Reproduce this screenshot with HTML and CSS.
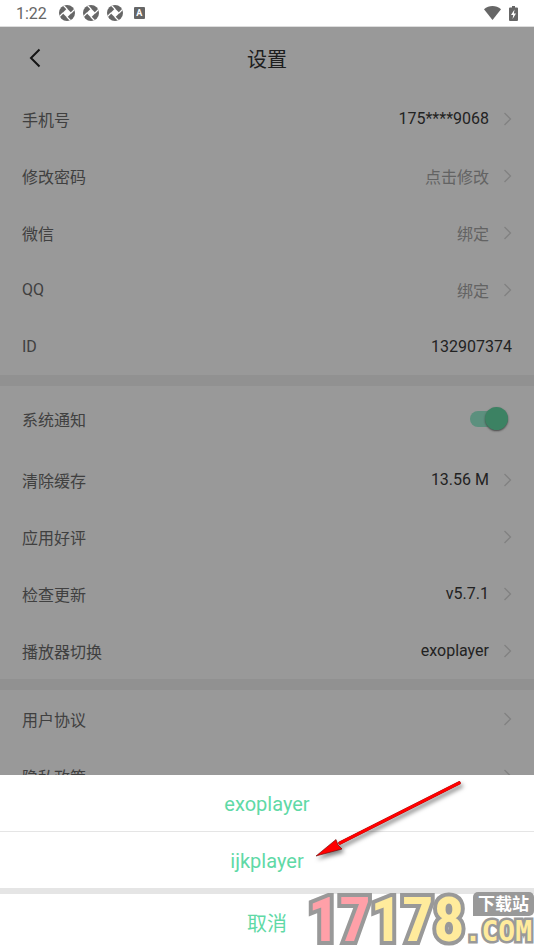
FILE: index.html
```html
<!DOCTYPE html>
<html lang="zh-CN">
<head>
<meta charset="utf-8">
<meta name="viewport" content="width=device-width, initial-scale=1">
<title>设置</title>
<link rel="stylesheet" href="styles.css">
</head>
<body>
<svg class="defs" aria-hidden="true">
  <symbol id="chevron" viewBox="0 0 9 14"><path d="M1.5 1 7.5 7l-6 6" fill="none" stroke="currentColor" stroke-width="1.3"/></symbol>
  <symbol id="fan" viewBox="0 0 16 16">
    <circle cx="8" cy="8" r="8" fill="currentColor"/>
    <path d="M8 3.500 12.500 8 8 12.500 3.500 8z" fill="#fff"/>
    <path d="M8 4 4.500.5M12 8l3.500-3.500M8 12l3.500 3.500M4 8 .5 11.500" stroke="#fff" stroke-width="1.2"/>
  </symbol>
</svg>

<div class="status">
  <span class="clock">1:22</span>
  <svg class="fan"><use href="#fan"/></svg>
  <svg class="fan"><use href="#fan"/></svg>
  <svg class="fan"><use href="#fan"/></svg>
  <span class="badge">A</span>
  <svg class="wifi" viewBox="0 0 17 14"><path d="M8.5 14 0 3.3C5-1 12-1 17 3.3z" fill="currentColor"/></svg>
  <svg class="battery" viewBox="0 0 9 15"><path d="M3 0h3v1.5h2q1 0 1 1V14q0 1-1 1H1q-1 0-1-1V2.5q0-1 1-1h2z" fill="currentColor"/><path d="M5.5 3.5 2 9h2.2l-.6 4L7 7.500H4.900z" fill="#fff"/></svg>
</div>

<main class="page">
  <header class="header">
    <button class="back" aria-label="返回"><svg viewBox="0 0 12 20"><path d="M10.5 1.5 2 10l8.500 8.500" fill="none" stroke="currentColor" stroke-width="2"/></svg></button>
    <h1>设置</h1>
  </header>

  <section class="group">
    <button class="row"><span>手机号</span><span class="value">175****9068</span><svg class="chevron"><use href="#chevron"/></svg></button>
    <button class="row"><span>修改密码</span><span class="value muted">点击修改</span><svg class="chevron"><use href="#chevron"/></svg></button>
    <button class="row"><span>微信</span><span class="value muted">绑定</span><svg class="chevron"><use href="#chevron"/></svg></button>
    <button class="row"><span>QQ</span><span class="value muted">绑定</span><svg class="chevron"><use href="#chevron"/></svg></button>
    <div class="row"><span>ID</span><span class="value">132907374</span></div>
  </section>

  <section class="group">
    <div class="row tall"><label for="notice">系统通知</label><input class="switch" id="notice" type="checkbox" role="switch" checked></div>
    <button class="row"><span>清除缓存</span><span class="value">13.56 M</span><svg class="chevron"><use href="#chevron"/></svg></button>
    <button class="row"><span>应用好评</span><span class="value"></span><svg class="chevron"><use href="#chevron"/></svg></button>
    <button class="row"><span>检查更新</span><span class="value">v5.7.1</span><svg class="chevron"><use href="#chevron"/></svg></button>
    <button class="row"><span>播放器切换</span><span class="value">exoplayer</span><svg class="chevron"><use href="#chevron"/></svg></button>
  </section>

  <section class="group">
    <button class="row"><span>用户协议</span><span class="value"></span><svg class="chevron"><use href="#chevron"/></svg></button>
    <button class="row"><span>隐私政策</span><span class="value"></span><svg class="chevron"><use href="#chevron"/></svg></button>
  </section>
  <div class="backdrop"></div>
</main>

<div class="sheet" role="dialog" aria-label="播放器切换">
  <button class="option">exoplayer</button>
  <button class="option second">ijkplayer</button>
  <button class="option cancel">取消</button>

  <svg class="arrow" viewBox="0 0 160 90" aria-hidden="true">
    <path d="M143 8 24 68" stroke="#a00" stroke-width="3.600" stroke-linecap="round"/>
    <path d="M143 8 24 68" stroke="#f00" stroke-width="2.800" stroke-linecap="round"/>
    <path d="M0 81 20 64.500 22 70 26 74z" fill="#f00" stroke="#600" stroke-width=".6"/>
  </svg>

  <div class="watermark">
    <div class="digits"><span class="red">17</span>178</div>
    <div class="side">
      <span class="bubble">下载站</span>
      <span class="com">.COM</span>
    </div>
  </div>
</div>
</body>
</html>
```

FILE: styles.css
```css
* { box-sizing: border-box; }

body {
  margin: 0;
  height: 100vh;
  display: flex;
  flex-direction: column;
  overflow: hidden;
  background: #fff;
  color: #6c6c6c;
  font-family: Roboto, "Noto Sans CJK SC", sans-serif;
  font-size: 16px;
}

button {
  border: 0;
  padding: 0;
  background: none;
  color: inherit;
  font: inherit;
}

.defs { position: absolute; width: 0; height: 0; }

.status {
  flex: none;
  display: flex;
  align-items: center;
  gap: 8px;
  height: 27px;
  padding: 0 16px;
  border-bottom: 1px solid #ddd;
  color: #666;
}

.clock { margin-right: 4px; }
.fan { width: 16px; height: 16px; }

.badge {
  width: 11px;
  margin-left: 3px;
  border-radius: 1px;
  background: #666;
  color: #fff;
  font-size: 9px;
  font-weight: 700;
  line-height: 12px;
  text-align: center;
}

.wifi { width: 17px; height: 14px; margin-left: auto; }
.battery { width: 9px; height: 15px; }

.page {
  position: relative;
  flex: 1;
  min-height: 0;
  overflow: hidden;
}

.header {
  display: grid;
  grid-template-columns: 1fr auto 1fr;
  align-items: center;
  height: 62px;
  padding: 0 29px;
  color: #333;
}

.header h1 { margin: 0; font-size: 20px; font-weight: 400; }
.back { justify-self: start; height: 20px; color: #222; }
.back svg { display: block; width: 12px; height: 20px; }

.header + .group { padding-top: 1px; }
.group + .group { border-top: 11px solid #f2f2f2; }

.row {
  display: flex;
  align-items: center;
  width: 100%;
  height: 57px;
  padding: 0 22px;
  text-align: left;
}

.row.tall { height: 65px; }
.value { margin-left: auto; color: #3a3a3a; }
.muted { color: #a6a6a6; }

.chevron {
  width: 9px;
  height: 14px;
  margin-left: 14px;
  color: #d8d8d8;
}

.switch {
  appearance: none;
  display: flex;
  align-items: center;
  justify-content: flex-end;
  width: 38px;
  height: 16px;
  margin: 0 4px 0 auto;
  border-radius: 8px;
  background: #99f0d2;
}

.switch::before {
  content: "";
  width: 23px;
  height: 23px;
  flex: none;
  border-radius: 50%;
  background: #64d9a5;
  box-shadow: 0 1px 2px #777;
}

.backdrop {
  position: absolute;
  inset: 0;
  background: rgba(0, 0, 0, .4);
}

.sheet {
  position: absolute;
  left: 0;
  right: 0;
  bottom: 0;
  background: #fff;
}

.option {
  display: block;
  width: 100%;
  height: 56px;
  padding-top: 2px;
  color: #5fd9a6;
  font-size: 20px;
}

.option.second { height: 57px; border-top: 1px solid #e5e5e5; }
.option.cancel { height: 62px; padding-top: 0; border-top: 6px solid #e5e5e5; }

.arrow {
  position: absolute;
  top: 0;
  left: calc(50% + 49px);
  width: 160px;
  height: 90px;
  filter: drop-shadow(2px 3px 2px rgba(0, 0, 0, .5));
  pointer-events: none;
}

.watermark {
  position: absolute;
  right: 0;
  bottom: 0;
  display: flex;
  align-items: flex-end;
  height: 60px;
  pointer-events: none;
}

.digits {
  color: #ffeb9c;
  font: 700 62px/60px "Liberation Sans Narrow", "Roboto Condensed", sans-serif;
  -webkit-text-stroke: 8px #999;
  paint-order: stroke fill;
}

.red { color: #ffa0a8; }

.side {
  display: flex;
  flex-direction: column;
  align-items: flex-end;
  height: 58px;
}

.bubble {
  padding: 0 5px;
  border-radius: 5px 5px 5px 0;
  background: #999;
  color: #fff;
  font-size: 17px;
  font-weight: 700;
  line-height: 24px;
}

.com {
  padding-right: 2px;
  color: #ffeb9c;
  font: 700 28px/32px "DejaVu Sans Mono", monospace;
  -webkit-text-stroke: 5px #999;
  paint-order: stroke fill;
}
```
